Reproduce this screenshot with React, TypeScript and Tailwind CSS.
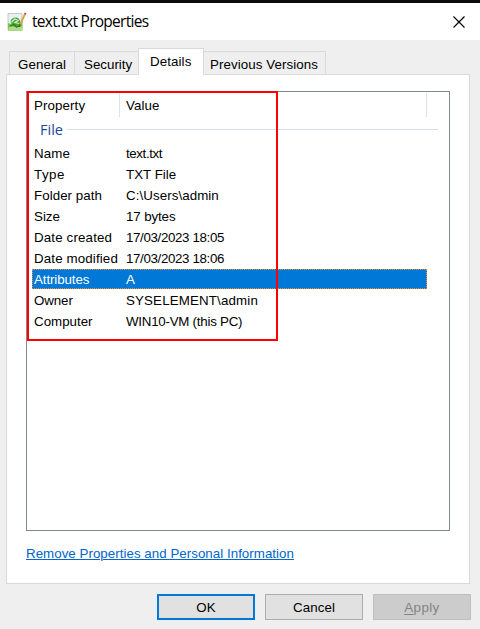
const rows = [
  { name: "Name", nameClass: "tracking-[0.15px]", value: "text.txt", valueClass: "tracking-[-0.4px]" },
  { name: "Type", nameClass: "tracking-[0.5px]", value: "TXT File", valueClass: "" },
  { name: "Folder path", nameClass: "tracking-[0.05px]", value: "C:\\Users\\admin", valueClass: "tracking-[0.07px]" },
  { name: "Size", nameClass: "", value: "17 bytes", valueClass: "tracking-[-0.12px]" },
  { name: "Date created", nameClass: "tracking-[0.15px]", value: "17/03/2023 18:05", valueClass: "tracking-[-0.36px]" },
  { name: "Date modified", nameClass: "tracking-[0.13px]", value: "17/03/2023 18:06", valueClass: "tracking-[-0.36px]" },
  { name: "Attributes", nameClass: "tracking-[-0.1px]", value: "A", valueClass: "", selected: true },
  { name: "Owner", nameClass: "tracking-[-0.1px]", value: "SYSELEMENT\\admin", valueClass: "tracking-[0.15px]" },
  { name: "Computer", nameClass: "", value: "WIN10-VM (this PC)", valueClass: "tracking-[-0.25px]" },
];

function FileIcon() {
  return (
    <svg width="20" height="20" viewBox="0 0 20 20" className="shrink-0">
      <path d="M1 1.500h14v4l-.5 12.500h-13.500z" fill="#e9f0f0" stroke="#b5bfc0" strokeWidth=".8" />
      <path d="M1 11c4 2 9 1 14.500-1.500v9h-14.500z" fill="#7cc243" />
      <path d="M1.500 15.500c5-2 9 1 13.500-1v3.500h-13.500z" fill="#addf80" />
      <path d="M3.500 9C5 5.500 9 4.300 12 7c2 2.500 1.500 5-.8 6.500-2.500 1.200-6.500.5-7.700-4.500z" fill="#43a83b" />
      <path d="M4.500 10l3.500-3 3 1.500-3 2 4 1" fill="none" stroke="#d7f1c2" strokeWidth="1.200" />
      <path d="M3 14l3.500-1.500 3 2.500 3-1" fill="none" stroke="#23772c" strokeWidth="1.300" />
      <path d="M18 2l-4.800 10.500" stroke="#dda04b" strokeWidth="1.900" />
      <path d="M18.600 .8l-.7 1.500" stroke="#a85b49" strokeWidth="2" />
      <path d="M13.200 12.200l-1 2.500" stroke="#54452f" strokeWidth="1.200" />
    </svg>
  );
}

export default function App() {
  return (
    <div className="flex h-[629px] w-[480px] flex-col overflow-hidden bg-[#efefef] font-['Liberation_Sans',Arial,sans-serif] text-[13.33px] leading-[21px] text-black">
      <header className="flex h-10 shrink-0 items-center border-t-3 border-[#0d0b0c] bg-white pl-[7px] pr-[14px]">
        <FileIcon />
        <h1 className="ml-[5px] grow whitespace-nowrap font-['Open_Sans','Noto_Sans',sans-serif] text-[15.5px] tracking-[-0.73px]">text.txt Properties</h1>
        <svg width="14" height="14" viewBox="0 0 14 14">
          <path d="M1.500 1.500l11 11M12.500 1.500l-11 11" stroke="#000" strokeWidth="1.150" />
        </svg>
      </header>

      <nav className="mt-2 flex h-[26px] shrink-0 items-end pl-[9px]">
        <div className="h-[23px] w-[65px] whitespace-nowrap border-l border-t border-[#d9d9d9] pl-2 pt-0.5 tracking-[0.1px]">General</div>
        <div className="h-[23px] w-16 whitespace-nowrap border-l border-t border-[#d9d9d9] pl-[9px] pt-0.5">Security</div>
        <div className="relative z-10 -mb-px h-[27px] w-[66px] whitespace-nowrap border-x border-t border-[#d9d9d9] bg-white pl-[11px] pt-[2px] tracking-[0.1px]">Details</div>
        <div className="h-[23px] w-[122px] whitespace-nowrap border-r border-t border-[#d9d9d9] pl-[6px] pt-0.5 tracking-[0.08px]">Previous Versions</div>
      </nav>

      <main className="ml-[6px] flex h-[510px] w-[464px] shrink-0 flex-col border border-[#d9d9d9] bg-white pl-[19px] pt-4">
        <div className="relative h-[440px] w-[424px] shrink-0 border border-[#828790]">
          <div className="ml-[5px] mt-px flex h-6 w-[395px] border-r border-[#e2e2e2]">
            <div className="w-[88px] border-r border-[#e2e2e2] pl-[2px] pt-[2px] tracking-[0.1px]">Property</div>
            <div className="pl-[6px] pt-[2px] tracking-[0.1px]">Value</div>
          </div>
          <div className="mb-[2px] ml-[12px] flex h-[24px] w-[399px] items-center font-['Open_Sans','Noto_Sans',sans-serif] text-[14.5px] text-[#1e479a]">
            <span className="w-[28px] pl-px">File</span>
            <span className="h-px grow bg-[#d5dff0]" />
          </div>
          <div className="ml-[5px]">
            {rows.map((row) => (
              <div key={row.name} className={row.selected ? "mb-px flex h-[20px] w-[395px] border border-dotted border-[#ff8728] bg-[#0078d7] pl-px leading-[19px] text-white" : "flex h-[21px] w-[395px] whitespace-nowrap pl-[2px]"}>
                <span className={"w-[92px] shrink-0 " + row.nameClass}>{row.name}</span>
                <span className={row.valueClass}>{row.value}</span>
              </div>
            ))}
          </div>
          <div className="pointer-events-none absolute left-0 -top-px h-[250px] w-[251px] border-2 border-[#f00]" />
        </div>
        <a className="mt-3 w-[268px] whitespace-nowrap tracking-[0.03px] text-[#0066cc] underline decoration-1 underline-offset-1">Remove Properties and Personal Information</a>
      </main>

      <footer className="mt-[10px] flex gap-[10px] pl-[157px]">
        <button className="h-[26px] w-[98px] border-2 border-[#0078d7] bg-[#e1e1e1] leading-[21px]">OK</button>
        <button className="h-[26px] w-[98px] border border-[#adadad] bg-[#e1e1e1] leading-[21px] tracking-[0.1px]">Cancel</button>
        <button className="h-[26px] w-[98px] border border-[#bfbfbf] bg-[#cccccc] leading-[21px] tracking-[0.4px] text-[#838383]"><span className="underline underline-offset-2">A</span>pply</button>
      </footer>
    </div>
  );
}
